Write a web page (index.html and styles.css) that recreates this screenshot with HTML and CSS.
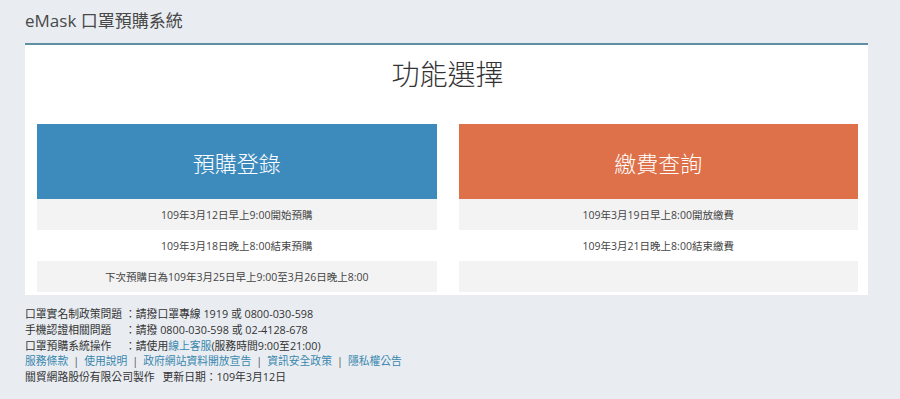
FILE: index.html
```html
<!DOCTYPE html>
<html lang="zh-Hant">
<head>
<meta charset="utf-8">
<title>eMask 口罩預購系統</title>
<link rel="stylesheet" href="styles.css">
</head>
<body>
<header class="site-header">eMask 口罩預購系統</header>
<main class="panel">
  <h1 class="panel-title">功能選擇</h1>
  <div class="cards">
    <section class="card">
      <div class="card-head blue">預購登錄</div>
      <div class="row gray">109年3月12日早上9:00開始預購</div>
      <div class="row">109年3月18日晚上8:00結束預購</div>
      <div class="row gray">下次預購日為109年3月25日早上9:00至3月26日晚上8:00</div>
    </section>
    <section class="card">
      <div class="card-head orange">繳費查詢</div>
      <div class="row gray">109年3月19日早上8:00開放繳費</div>
      <div class="row">109年3月21日晚上8:00結束繳費</div>
      <div class="row gray"></div>
    </section>
  </div>
</main>
<footer class="footer">
  <div><span class="label">口罩實名制政策問題</span>：請撥口罩專線 1919 或 0800-030-598</div>
  <div><span class="label">手機認證相關問題</span>：請撥 0800-030-598 或 02-4128-678</div>
  <div><span class="label">口罩預購系統操作</span>：請使用<a href="#">線上客服</a>(服務時間9:00至21:00)</div>
  <div class="links"><a href="#">服務條款</a><span class="sep">|</span><a href="#">使用說明</a><span class="sep">|</span><a href="#">政府網站資料開放宣告</a><span class="sep">|</span><a href="#">資訊安全政策</a><span class="sep">|</span><a href="#">隱私權公告</a></div>
  <div>關貿網路股份有限公司製作<span class="gap"></span>更新日期：109年3月12日</div>
</footer>
</body>
</html>
```

FILE: styles.css
```css
html, body {
  margin: 0;
  padding: 0;
}
body {
  background: #e9edf2;
  font-family: "Open Sans", "Noto Sans CJK TC", sans-serif;
  color: #333;
  height: 399px;
  overflow: hidden;
}
.site-header {
  height: 43px;
  box-sizing: border-box;
  padding: 9px 0 0 25px;
  font-size: 17px;
  line-height: 24px;
  color: #484848;
}
.panel {
  margin: 0 32px 0 25px;
  background: #fff;
  border-top: 2px solid #5f8fa3;
  padding: 0 10px 0 12px;
  height: 250px;
  overflow: hidden;
}
.panel-title {
  margin: 0;
  padding: 11px 0 32px;
  font-size: 28px;
  line-height: 36px;
  font-weight: 300;
  text-align: center;
  color: #333;
}
.cards {
  display: grid;
  grid-template-columns: 1fr 1fr;
  column-gap: 22px;
}
.card-head {
  height: 75px;
  display: flex;
  align-items: center;
  justify-content: center;
  color: #fff;
  font-size: 22px;
  font-weight: 300;
}
.blue { background: #3d8bbd; }
.orange { background: #de7149; }
.row {
  height: 31px;
  display: flex;
  align-items: center;
  justify-content: center;
  font-size: 10.5px;
  color: #444;
}
.row.gray { background: #f3f3f3; }
.footer {
  padding: 11px 0 0 25px;
  font-size: 10.8px;
  line-height: 15.8px;
  color: #333;
}
.label {
  display: inline-block;
  width: 100px;
}
.footer a {
  color: #3a87ad;
  text-decoration: none;
}
.sep {
  margin: 0 5px;
  color: #555;
}
.gap {
  display: inline-block;
  width: 8px;
}
```
